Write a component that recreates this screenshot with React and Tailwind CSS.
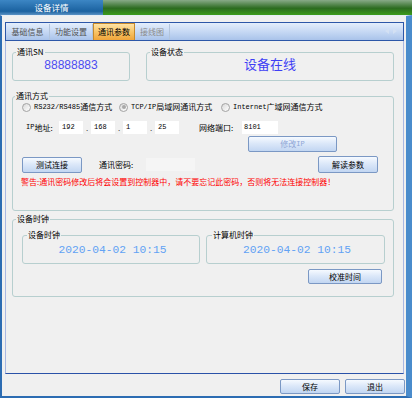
import React from 'react';

const btn =
  'flex items-center justify-center rounded-[2px] border border-[#7b98c4] bg-[linear-gradient(#f6faff,#dce8f9_45%,#c2d6f2)] text-[8px] leading-none';

const mono = "font-['Liberation_Mono',monospace] text-[7px]";

function Group({ title, className, legendClass = 'ml-[3px]', children }) {
  return (
    <fieldset className={`rounded-[3px] border border-[#b7cfcf] ${className}`}>
      <legend className={`px-[1px] text-[8px] leading-[10px] text-black ${legendClass}`}>{title}</legend>
      {children}
    </fieldset>
  );
}

function Radio({ latin, label, checked, className }) {
  return (
    <div className={`flex items-center gap-[3px] ${className}`}>
      <span className="flex h-[9px] w-[9px] items-center justify-center rounded-full border border-[#a3a3a3] bg-[linear-gradient(135deg,#d9d9d9,#ffffff)]">
        {checked && <span className="h-[4px] w-[4px] rounded-full bg-[#a8a8a8]" />}
      </span>
      <span className="flex items-center text-[8px] leading-[10px] text-black">
        <span className={mono}>{latin}</span>
        {label}
      </span>
    </div>
  );
}

function IpBox({ value }) {
  return (
    <div className={`flex h-[13px] w-[24px] items-center bg-white pl-[3px] text-black ${mono}`}>
      {value}
    </div>
  );
}

function Dot() {
  return <div className="flex w-[8px] items-end justify-center pb-[2px] text-[8px] leading-none text-[#404040]">.</div>;
}

const tabs = [
  { name: '基础信息', w: 'w-[44px]', cls: 'text-[#505050]' },
  { name: '功能设置', w: 'w-[43px]', cls: 'text-[#505050]' },
  { name: '通讯参数', w: 'w-[42px]', active: true },
  { name: '接线图', w: 'w-[35px]', cls: 'text-[#8c8c8c]' },
];

export default function App() {
  return (
    <div className="flex h-[398px] w-[412px] flex-col overflow-hidden bg-[#f0f0f0] font-['Noto_Sans_CJK_SC','Liberation_Sans',sans-serif] text-black">
      {/* Title bar */}
      <div className="flex h-[15px] shrink-0">
        <div className="flex w-[103px] items-center justify-center bg-[linear-gradient(#3c86c4,#1b62a0_75%,#5a92c4)] text-[8.5px] leading-none text-white">
          设备详情
        </div>
        <div className="flex-1 bg-[linear-gradient(#88aa88,#2c6b20_55%,#3d9c1b)]" />
      </div>

      {/* Window body */}
      <div className="flex flex-1 flex-col border-b-2 border-l-2 border-r-[6px] border-t border-b-[#2c6cb2] border-l-[#2c6cb2] border-r-[#4a8ccc] border-t-[#e6eef6]">
        {/* Tab control */}
        <div className="ml-[3px] mt-[6px] flex h-[352px] w-[399px] flex-col">
          <div className="relative flex h-[19px] shrink-0 items-end border border-[#2d57a8] bg-[linear-gradient(#e4eefc,#c4d7f3_55%,#a9c3ea)]">
            {tabs.map((t) =>
              t.active ? (
                <div
                  key={t.name}
                  className={`flex h-[17px] ${t.w} items-center justify-center border border-b-0 border-[#c68a2c] bg-[linear-gradient(#fde3a6,#f8c466_50%,#f0a53a)] text-[8px] leading-none text-black`}
                >
                  {t.name}
                </div>
              ) : (
                <div
                  key={t.name}
                  className={`flex h-[16px] ${t.w} items-center justify-center border-r border-[#b2c4dc] text-[8px] leading-none ${t.cls}`}
                >
                  {t.name}
                </div>
              )
            )}
            <div className="absolute right-[6px] top-[5px] flex gap-[4px]">
              <svg width="4" height="6" viewBox="0 0 4 6"><path d="M4 0L0 3L4 6Z" fill="#d3e0f3" /></svg>
              <svg width="4" height="6" viewBox="0 0 4 6"><path d="M0 0L4 3L0 6Z" fill="#d3e0f3" /></svg>
            </div>
          </div>

          {/* Tab panel */}
          <div className="flex flex-1 flex-col border-b border-l border-r border-b-[#2a52a8] border-l-[#a9b8e2] border-r-[#a9b8e2] pl-[6px] pr-[9px]">
            {/* SN + status */}
            <div className="mt-[6px] flex gap-[16px]">
              <Group title="通讯SN" className="w-[118px]">
                <div className="flex h-[23px] justify-center pt-[1px] font-['Liberation_Sans',sans-serif] text-[12px] leading-[14px] text-[#4c4cf2]">
                  88888883
                </div>
              </Group>
              <Group title="设备状态" className="flex-1">
                <div className="flex h-[23px] justify-center text-[13px] leading-[13px] text-[#3f3ff5]">设备在线</div>
              </Group>
            </div>

            {/* Communication mode */}
            <Group title="通讯方式" className="mt-[10px]" legendClass="ml-[2px]">
              <div className="flex h-[109px] flex-col">
                <div className="ml-[9px] mt-[1px] flex h-[10px]">
                  <Radio className="w-[97px]" latin="RS232/RS485" label="通信方式" />
                  <Radio className="w-[102px]" latin="TCP/IP" label="局域网通讯方式" checked />
                  <Radio latin="Internet" label="广域网通信方式" />
                </div>

                <div className="ml-[13px] mt-[9px] flex h-[13px]">
                  <div className="flex w-[33px] items-center text-[8px] leading-none">
                    <span className={mono}>IP</span>地址:
                  </div>
                  <IpBox value="192" />
                  <Dot />
                  <IpBox value="168" />
                  <Dot />
                  <IpBox value="1" />
                  <Dot />
                  <IpBox value="25" />
                  <div className="ml-[20px] flex w-[43px] items-center text-[8px] leading-none">网络端口:</div>
                  <div className={`flex w-[36px] items-center bg-white pl-[2px] ${mono}`}>8101</div>
                </div>

                <div className={`${btn} ml-[235px] mt-[2px] h-[16px] w-[89px] text-[#8fa6d6]`}>
                  修改<span className={mono}>IP</span>
                </div>

                <div className="mt-[4px] flex h-[17px] items-center">
                  <div className={`${btn} ml-[9px] h-[16px] w-[60px]`}>测试连接</div>
                  <div className="ml-[17px] w-[47px] text-[8px] leading-none">通讯密码:</div>
                  <div className="h-[13px] w-[49px] bg-[#f5f5f5]" />
                  <div className={`${btn} ml-[123px] h-[17px] w-[60px]`}>解读参数</div>
                </div>

                <div className="ml-[8px] mt-[4px] text-[8px] leading-[10px] text-[#ff0000]">
                  警告:通讯密码修改后将会设置到控制器中，请不要忘记此密码，否则将无法连接控制器！
                </div>
              </div>
            </Group>

            {/* Clocks */}
            <Group title="设备时钟" className="mt-[3px]">
              <div className="flex h-[72px] flex-col">
                <div className="ml-[9px] mt-[6px] flex gap-[6px]">
                  <Group title="设备时钟" className="w-[178px]" legendClass="ml-[4px]">
                    <div className="flex h-[23px] justify-center pl-[3px] pt-[3px] font-['Liberation_Mono',monospace] text-[11.25px] leading-[14px] text-[#62a2f4]">
                      2020-04-02 10:15
                    </div>
                  </Group>
                  <Group title="计算机时钟" className="w-[179px]" legendClass="ml-[5px]">
                    <div className="flex h-[23px] justify-center pl-[3px] pt-[3px] font-['Liberation_Mono',monospace] text-[11.25px] leading-[14px] text-[#62a2f4]">
                      2020-04-02 10:15
                    </div>
                  </Group>
                </div>
                <div className={`${btn} ml-[295px] mt-[5px] h-[15px] w-[74px]`}>校准时间</div>
              </div>
            </Group>
          </div>
        </div>

        {/* Bottom buttons */}
        <div className="mt-[5px] flex justify-end gap-[5px] pr-[1px]">
          <div className={`${btn} h-[15px] w-[60px]`}>保存</div>
          <div className={`${btn} h-[15px] w-[60px]`}>退出</div>
        </div>
      </div>
    </div>
  );
}
